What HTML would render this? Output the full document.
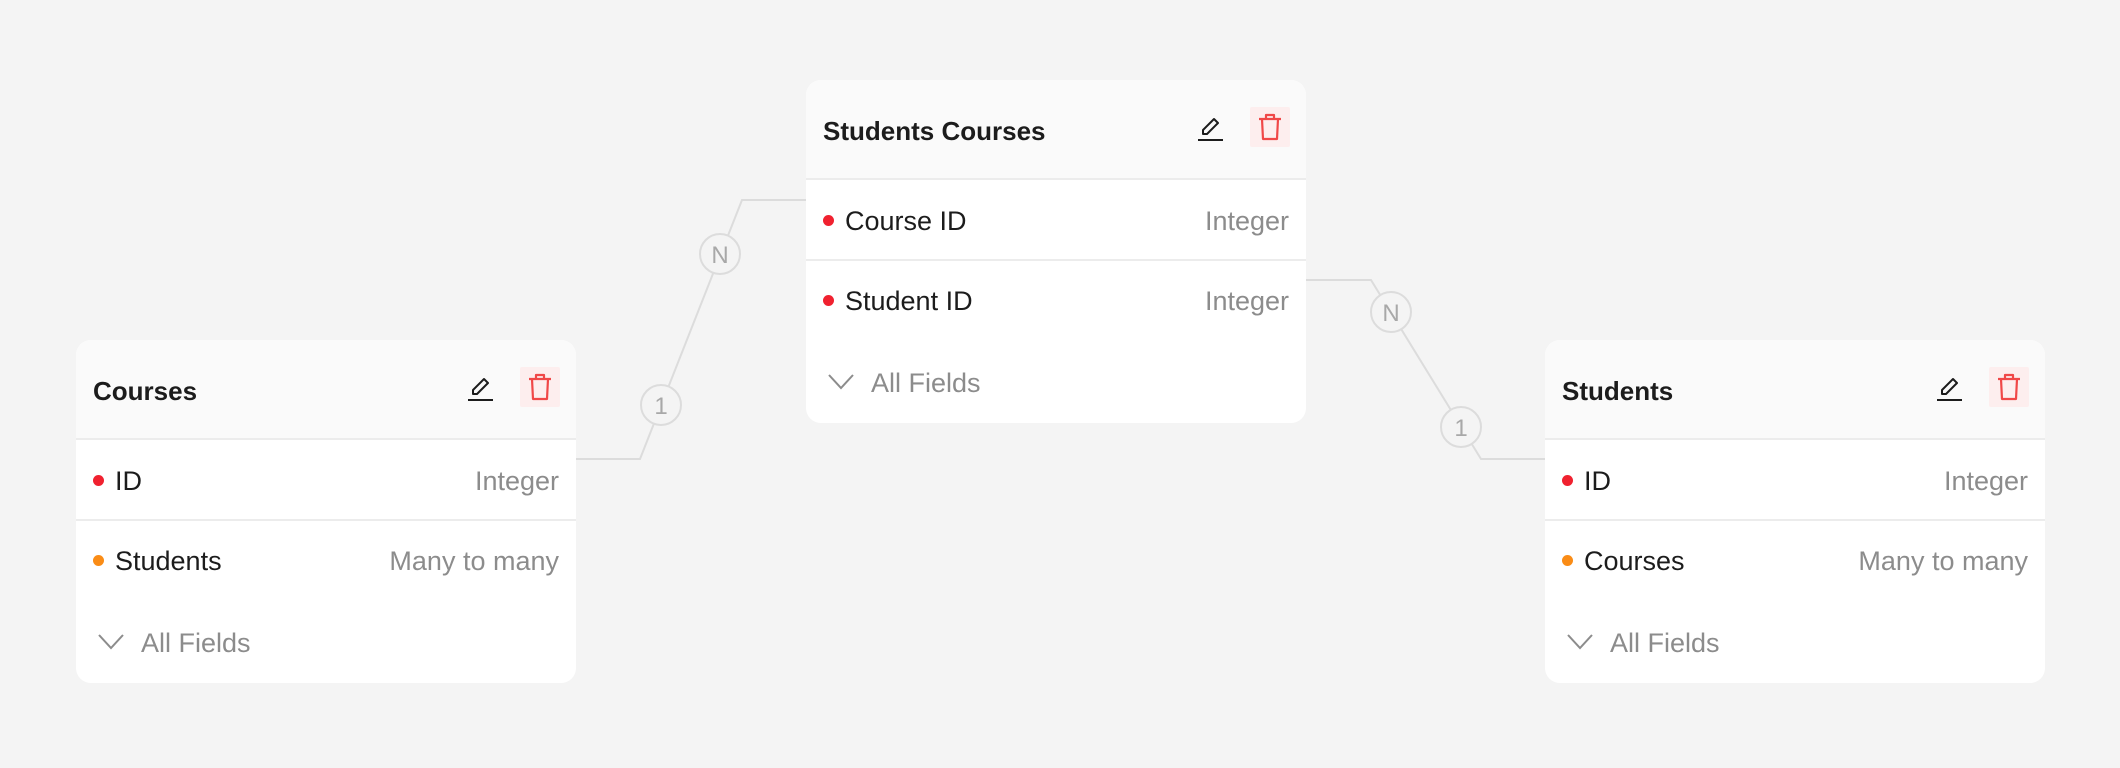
<!DOCTYPE html>
<html><head><meta charset="utf-8"><style>
*{margin:0;padding:0;box-sizing:border-box}
body{width:2120px;height:768px;background:#f4f4f4;position:relative;overflow:hidden;font-family:"Liberation Sans",sans-serif}
.card{position:absolute;width:500px;height:343px;background:#fff;border-radius:15px;overflow:hidden}
.hd{position:absolute;left:0;top:0;width:500px;height:100px;background:#fafafa;border-bottom:2px solid #ececec}
.title{position:absolute;left:17px;top:36px;font-size:26px;font-weight:bold;color:#1c1c1c;line-height:30px}
.pen{position:absolute;left:391px;top:35px}
.trash{position:absolute;left:444px;top:27px;width:40px;height:40px;background:#fdeeee;border-radius:2px}
.trash svg{position:absolute;left:7px;top:6px}
.row{position:absolute;left:0;width:500px;height:80px}
.row.b{border-bottom:2px solid #ececec}
.dot{position:absolute;left:17px;top:34px;width:11px;height:11px;border-radius:50%}
.nm{position:absolute;left:39px;top:24px;font-size:27px;color:#1c1c1c;line-height:32px}
.ty{position:absolute;right:17px;top:24px;font-size:27px;color:#8c8c8c;line-height:32px}
.af{position:absolute;left:65px;top:287px;font-size:27px;color:#8c8c8c;line-height:32px}
.chev{position:absolute;left:22px;top:294px}
</style></head><body>
<svg width="2120" height="768" style="position:absolute;left:0;top:0">
<g fill="none" stroke="#dcdcdc" stroke-width="2">
<polyline points="576,459 640,459 742,200 806,200"/>
<polyline points="1306,280 1371,280 1481,459 1545,459"/>
<circle cx="720" cy="254" r="20" fill="#f4f4f4"/>
<circle cx="661" cy="405" r="20" fill="#f4f4f4"/>
<circle cx="1391" cy="312" r="20" fill="#f4f4f4"/>
<circle cx="1461" cy="427" r="20" fill="#f4f4f4"/>
</g>
<g font-family="Liberation Sans" font-size="24" fill="#a8a8a8" text-anchor="middle">
<text x="720" y="263">N</text><text x="661" y="414">1</text>
<text x="1391" y="321">N</text><text x="1461" y="436">1</text>
</g>
</svg>

<div class="card" style="left:806px;top:80px">
<div class="hd"><div class="title">Students Courses</div>
<svg class="pen" width="26" height="26" viewBox="0 0 26 26" fill="none" stroke="#1c1c1c" stroke-width="2" stroke-linejoin="round"><path d="M6 19 L6 15 L17 4 L21 8 L10 19 Z"/><path d="M1 25 H26"/></svg>
<div class="trash"><svg width="26" height="28" viewBox="0 0 26 28" fill="none" stroke="#f04848" stroke-width="2.2" stroke-linejoin="round"><path d="M2 6 H24"/><path d="M9 6 V2 H17 V6"/><path d="M5 6 L6 26 H20 L21 6"/></svg></div>
</div>
<div class="row b" style="top:101px"><div class="dot" style="background:#f0212f"></div><div class="nm">Course ID</div><div class="ty">Integer</div></div>
<div class="row" style="top:181px"><div class="dot" style="background:#f0212f"></div><div class="nm">Student ID</div><div class="ty">Integer</div></div>
<svg class="chev" width="26" height="16" viewBox="0 0 26 16" fill="none" stroke="#8c8c8c" stroke-width="2"><path d="M1 1 L13 14 L25 1"/></svg>
<div class="af">All Fields</div>
</div>

<div class="card" style="left:76px;top:340px">
<div class="hd"><div class="title">Courses</div>
<svg class="pen" width="26" height="26" viewBox="0 0 26 26" fill="none" stroke="#1c1c1c" stroke-width="2" stroke-linejoin="round"><path d="M6 19 L6 15 L17 4 L21 8 L10 19 Z"/><path d="M1 25 H26"/></svg>
<div class="trash"><svg width="26" height="28" viewBox="0 0 26 28" fill="none" stroke="#f04848" stroke-width="2.2" stroke-linejoin="round"><path d="M2 6 H24"/><path d="M9 6 V2 H17 V6"/><path d="M5 6 L6 26 H20 L21 6"/></svg></div>
</div>
<div class="row b" style="top:101px"><div class="dot" style="background:#f0212f"></div><div class="nm">ID</div><div class="ty">Integer</div></div>
<div class="row" style="top:181px"><div class="dot" style="background:#fa8c16"></div><div class="nm">Students</div><div class="ty">Many to many</div></div>
<svg class="chev" width="26" height="16" viewBox="0 0 26 16" fill="none" stroke="#8c8c8c" stroke-width="2"><path d="M1 1 L13 14 L25 1"/></svg>
<div class="af">All Fields</div>
</div>

<div class="card" style="left:1545px;top:340px">
<div class="hd"><div class="title">Students</div>
<svg class="pen" width="26" height="26" viewBox="0 0 26 26" fill="none" stroke="#1c1c1c" stroke-width="2" stroke-linejoin="round"><path d="M6 19 L6 15 L17 4 L21 8 L10 19 Z"/><path d="M1 25 H26"/></svg>
<div class="trash"><svg width="26" height="28" viewBox="0 0 26 28" fill="none" stroke="#f04848" stroke-width="2.2" stroke-linejoin="round"><path d="M2 6 H24"/><path d="M9 6 V2 H17 V6"/><path d="M5 6 L6 26 H20 L21 6"/></svg></div>
</div>
<div class="row b" style="top:101px"><div class="dot" style="background:#f0212f"></div><div class="nm">ID</div><div class="ty">Integer</div></div>
<div class="row" style="top:181px"><div class="dot" style="background:#fa8c16"></div><div class="nm">Courses</div><div class="ty">Many to many</div></div>
<svg class="chev" width="26" height="16" viewBox="0 0 26 16" fill="none" stroke="#8c8c8c" stroke-width="2"><path d="M1 1 L13 14 L25 1"/></svg>
<div class="af">All Fields</div>
</div>
</body></html>
